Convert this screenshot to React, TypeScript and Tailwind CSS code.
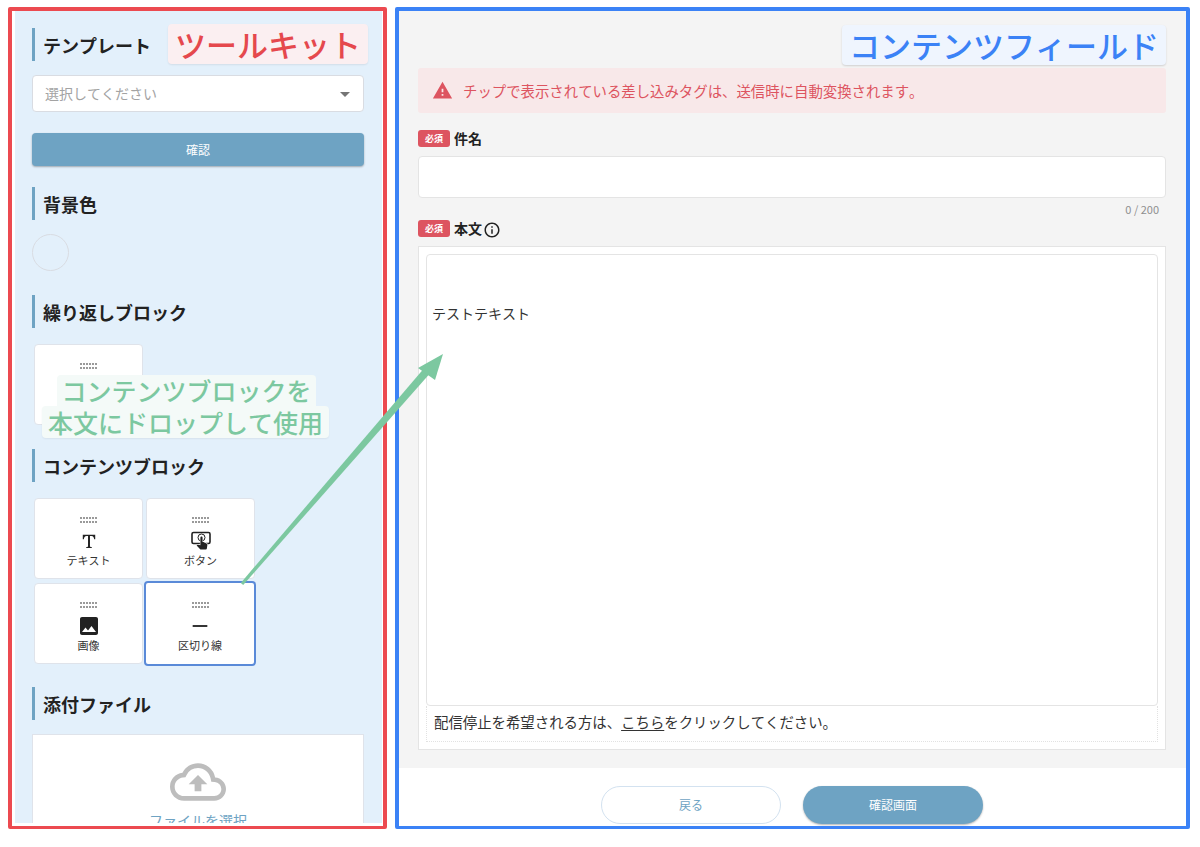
import { MdArrowDropDown, MdHorizontalRule, MdImage, MdInfoOutline, MdOutlineCloudUpload, MdWarning } from "react-icons/md";
import type { ReactNode } from "react";

const font = "[font-family:'Noto_Sans_CJK_JP','Noto_Sans',sans-serif] [font-kerning:none]";

function Heading({ children, className = "" }: { children: ReactNode; className?: string }) {
  return (
    <h2 className={`flex h-[33px] items-center border-l-[3px] border-[#6ea3c3] pl-2 pt-px text-[18px] font-bold text-[#222] ${className}`}>
      {children}
    </h2>
  );
}

function DragDots() {
  return (
    <div className="grid grid-cols-[repeat(6,2px)] gap-x-px gap-y-[2px]">
      {Array.from({ length: 12 }).map((_, i) => (
        <span key={i} className="h-[2px] w-[2px] bg-[#9a9a9a]" />
      ))}
    </div>
  );
}

function SerifT() {
  return (
    <svg viewBox="0 0 18 18" className="h-[16px] w-[16px] fill-[#222]">
      <path d="M2 2h14v5h-1.2c-.2-2-1-3.700-3-3.700h-1.700v11.500c0 .6.4.9 1 .9h1v1.100H5.900v-1.100h1c.6 0 1-.3 1-.9V3.300H6.200c-2 0-2.800 1.700-3 3.700H2z" />
    </svg>
  );
}

// rounded button outline with a ring and a tapping hand over it
function ButtonTap() {
  return (
    <svg viewBox="0 0 20 20" className="h-[20px] w-[20px]">
      <rect x="1" y="1.500" width="18" height="11" rx="1.500" fill="none" stroke="#222" strokeWidth="1.600" />
      <circle cx="10.500" cy="6.500" r="3.500" fill="none" stroke="#222" strokeWidth="1" />
      <g transform="translate(2.200 1.200) scale(0.72)">
        <path
          fill="#222"
          stroke="#fff"
          strokeWidth="1.400"
          paintOrder="stroke"
          d="M18.840 15.870l-4.540-2.260c-.17-.07-.35-.11-.54-.11H13v-6c0-.83-.67-1.500-1.500-1.500S10 6.670 10 7.500v10.740l-3.430-.72c-.08-.01-.15-.03-.24-.03-.31 0-.59.13-.79.33l-.79.8 4.940 4.940c.27.27.65.44 1.060.44h6.790c.75 0 1.330-.55 1.440-1.280l.75-5.270c.01-.07.02-.14.02-.2 0-.62-.38-1.160-.91-1.380z"
        />
      </g>
    </svg>
  );
}

function BlockCard({ icon, label, active = false }: { icon?: ReactNode; label?: string; active?: boolean }) {
  return (
    <div
      className={`flex flex-col items-center rounded bg-white ${
        active
          ? "m-[-2px] h-[85px] w-[112px] border-2 border-[#5a8ad8] pt-[19px]"
          : "h-[81px] w-[109px] border border-[#dfe3ea] pt-[18px]"
      }`}
    >
      <DragDots />
      <div className="mt-[8px] flex h-[20px] items-center justify-center text-[#222]">{icon}</div>
      <span className="mt-px text-[11px] leading-[16px] text-[#333]">{label}</span>
    </div>
  );
}

function RequiredBadge() {
  return (
    <span className="flex h-[17px] w-[32px] items-center justify-center rounded-[3px] bg-[#dd5460] text-[9px] font-bold text-white">
      必須
    </span>
  );
}

function Toolkit() {
  return (
    <aside className="relative h-[822px] w-[379px] shrink-0 overflow-hidden rounded-[2px] border-x-4 border-t-4 border-b-[3px] border-[#ec4a50] bg-white pb-[3px] pl-[3px] pr-px">
      <div className="h-full overflow-hidden bg-[#e3f0fb] pl-[17px] pr-[18px] pt-[17px]">
        <Heading>テンプレート</Heading>
        <div className="mt-[14px] flex h-[37px] items-center justify-between rounded border border-[#d9dce2] bg-white pl-3 pr-[6px] text-sm text-[#a3a3a3]">
          <span className="pb-px">選択してください</span>
          <MdArrowDropDown className="text-2xl text-[#757575]" />
        </div>
        <button className="mt-[21px] block h-[33px] w-full rounded bg-[#6ea3c3] text-xs text-white shadow-[0_1px_2px_rgba(0,0,0,0.3)]">確認</button>

        <Heading className="mt-[21px]">背景色</Heading>
        <div className="mt-[14px] h-[37px] w-[37px] rounded-full border border-[#d9dce2]" />

        <Heading className="mt-6">繰り返しブロック</Heading>
        <div className="mt-4 pl-[2px]">
          <BlockCard />
        </div>

        <Heading className="mt-6">コンテンツブロック</Heading>
        <div className="mt-4 grid grid-cols-[109px_109px] gap-x-[3px] gap-y-1 pl-[2px]">
          <BlockCard icon={<SerifT />} label="テキスト" />
          <BlockCard icon={<ButtonTap />} label="ボタン" />
          <BlockCard icon={<MdImage className="text-[24px]" />} label="画像" />
          <BlockCard icon={<MdHorizontalRule className="text-[22px]" />} label="区切り線" active />
        </div>

        <Heading className="mt-[23px]">添付ファイル</Heading>
        <div className="mt-[14px] flex h-[120px] flex-col items-center border border-[#dfe3ea] bg-white pt-[19px]">
          <MdOutlineCloudUpload className="text-[56px] text-[#bdbdbd]" />
          <span className="text-sm text-[#6ea3c3]">ファイルを選択</span>
        </div>
      </div>
    </aside>
  );
}

function ContentField() {
  return (
    <main className="flex h-[822px] w-[795px] shrink-0 flex-col overflow-hidden rounded-[2px] border-4 border-b-[3px] border-[#3b82f6] bg-white">
      <div className="h-[757px] bg-[#f4f4f4] pl-[19px] pr-5 pt-[57px]">
        <div className="flex h-[45px] items-center rounded-[3px] bg-[#f8e8e9] pl-[14px] text-[14.4px] text-[#dd5460]">
          <MdWarning className="mr-[10px] text-[21px]" />
          チップで表示されている差し込みタグは、送信時に自動変換されます。
        </div>

        <div className="mt-[17px] flex h-[17px] items-center gap-1">
          <RequiredBadge />
          <span className="pb-[2px] text-sm font-bold text-[#222]">件名</span>
        </div>
        <div className="mt-[9px] h-[42px] rounded border border-[#e4e4e4] bg-white" />
        <p className="mt-[4px] pr-[7px] text-right text-[11px] leading-[14px] text-[#8f8f8f]">0 / 200</p>

        <div className="mt-[4px] flex h-[17px] items-center gap-1">
          <RequiredBadge />
          <span className="pb-[2px] text-sm font-bold text-[#222]">本文</span>
          <MdInfoOutline className="-ml-[3px] mt-[2px] text-[18px] text-[#222]" />
        </div>
        <div className="mt-[9px] h-[504px] border border-[#e4e4e4] bg-white px-[7px] pt-[7px]">
          <div className="h-[452px] rounded border border-[#e4e4e4] pl-[5px] pt-[48px] text-sm leading-5 text-[#333]">テストテキスト</div>
          <div className="flex h-[36px] items-center border-x border-b border-dotted border-[#e2e2e2] pb-[3px] pl-[7px] text-[14.4px] text-[#333]">
            配信停止を希望される方は、<span className="underline underline-offset-2">こちら</span>をクリックしてください。
          </div>
        </div>
      </div>
      <div className="flex justify-center gap-[22px] pr-[1px] pt-[18px]">
        <button className="h-[38px] w-[180px] rounded-full border border-[#d3e2f0] bg-white text-xs text-[#6ea3c3]">戻る</button>
        <button className="h-[38px] w-[180px] rounded-full bg-[#6ea3c3] text-xs text-white shadow-[0_1px_2px_rgba(0,0,0,0.3)]">確認画面</button>
      </div>
    </main>
  );
}

export default function App() {
  return (
    <div className={`relative h-[847px] w-[1200px] overflow-hidden bg-white ${font}`}>
      <div className="flex gap-2 pl-2 pt-[7px]">
        <Toolkit />
        <ContentField />
      </div>

      {/* annotations on top of the screenshot */}
      <div className="absolute left-[168px] top-[24px] flex h-[40px] w-[200px] items-center justify-center rounded bg-[#fbeff1] text-[31px] font-medium text-[#e5484d] shadow-[0_1px_2px_rgba(0,0,0,0.08)]">
        ツールキット
      </div>
      <div className="absolute left-[842px] top-[25px] flex h-[40px] w-[324px] items-center justify-center rounded bg-[#eff5fe] text-[31px] font-medium text-[#3b82f6] shadow-[0_1px_2px_rgba(0,0,0,0.15)]">
        コンテンツフィールド
      </div>
      <div className="absolute left-[57px] top-[375px] flex h-[31px] w-[259px] items-center justify-center rounded-t bg-[#f4faf8] text-[25px] font-medium leading-none text-[#7cc8a0]">
        コンテンツブロックを
      </div>
      <div className="absolute left-[42px] top-[406px] flex h-[32px] w-[287px] items-center justify-center rounded bg-[#f4faf8] text-[25px] font-medium leading-none text-[#7cc8a0] shadow-[0_1px_2px_rgba(0,0,0,0.06)]">
        本文にドロップして使用
      </div>
      <svg className="absolute left-0 top-0 h-[847px] w-[1200px]" viewBox="0 0 1200 847">
        <polygon points="240.800,582.900 243.200,585.100 429,374.600 423,369.400" fill="#7cc8a0" />
        <polygon points="443,354 418,368 435,380" fill="#7cc8a0" />
      </svg>
    </div>
  );
}
